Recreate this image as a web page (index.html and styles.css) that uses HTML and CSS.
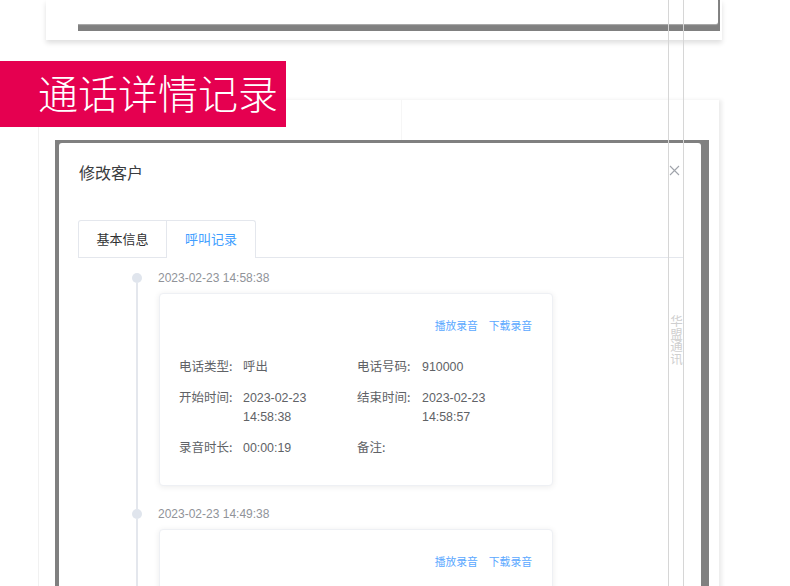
FILE: index.html
```html
<!DOCTYPE html>
<html lang="zh-CN">
<head>
<meta charset="utf-8">
<title>通话详情记录</title>
<link rel="stylesheet" href="styles.css">
</head>
<body>
<div class="page">
  <div class="top-card">
    <div class="top-mask"><div class="top-dialog"></div></div>
  </div>

  <div class="banner">通话详情记录</div>

  <div class="bg-card">
    <div class="bg-head"></div>
    <div class="mask">
      <div class="dialog">
        <div class="dlg-header">
          <span class="dlg-title">修改客户</span>
          <svg class="close" width="11" height="11" viewBox="0 0 11 11"><path d="M1 1L10 10M10 1L1 10" stroke="#a0a4ab" stroke-width="1.1" fill="none"/></svg>
        </div>
        <div class="tabs">
          <div class="tab">基本信息</div>
          <div class="tab active">呼叫记录</div>
        </div>
        <div class="timeline">
          <div class="tl-item">
            <div class="rail"><span class="dot"></span><span class="line"></span></div>
            <div class="tl-body">
              <div class="stamp">2023-02-23 14:58:38</div>
              <div class="card">
                <div class="links"><a>播放录音</a><a>下载录音</a></div>
                <div class="grid">
                  <span class="lab">电话类型:</span><span class="val">呼出</span>
                  <span class="lab">电话号码:</span><span class="val">910000</span>
                  <span class="lab">开始时间:</span><span class="val">2023-02-23 14:58:38</span>
                  <span class="lab">结束时间:</span><span class="val">2023-02-23 14:58:57</span>
                  <span class="lab">录音时长:</span><span class="val">00:00:19</span>
                  <span class="lab">备注:</span><span class="val"></span>
                </div>
              </div>
            </div>
          </div>
          <div class="tl-item">
            <div class="rail"><span class="dot"></span><span class="line"></span></div>
            <div class="tl-body">
              <div class="stamp">2023-02-23 14:49:38</div>
              <div class="card">
                <div class="links"><a>播放录音</a><a>下载录音</a></div>
              </div>
            </div>
          </div>
        </div>
      </div>
    </div>
  </div>

  <div class="guide g1"></div>
  <div class="guide g2"></div>
  <div class="watermark">华盟通讯</div>
</div>
</body>
</html>
```

FILE: styles.css
```css
html, body {
  margin: 0;
  padding: 0;
  background: #ffffff;
}
body {
  font-family: "Liberation Sans", "Noto Sans CJK SC", sans-serif;
  color: #606266;
}
.page {
  position: relative;
  width: 790px;
  height: 586px;
  overflow: hidden;
  background: #ffffff;
}

/* top previous screenshot */
.top-card {
  margin-left: 46px;
  width: 676px;
  height: 40px;
  background: #ffffff;
  box-shadow: 0 3px 5px rgba(0, 0, 0, 0.13);
}
.top-mask {
  margin-left: 32px;
  width: 642px;
  height: 31px;
  background: #808080;
}
.top-dialog {
  width: 640px;
  height: 24px;
  background: #ffffff;
  border-bottom-right-radius: 2px;
  box-shadow: 0 1px 1px rgba(255, 255, 255, 0.35);
}

/* banner */
.banner {
  position: relative;
  z-index: 2;
  margin-top: 21px;
  width: 248px;
  height: 66px;
  padding-left: 38px;
  background: #e50050;
  color: #ffffff;
  font-family: "Noto Sans CJK SC", sans-serif;
  font-weight: 300;
  font-size: 40px;
  line-height: 63px;
}

/* background card */
.bg-card {
  margin-top: -27px;
  margin-left: 38px;
  width: 680px;
  height: 520px;
  background: #ffffff;
  border-left: 1px solid #f1f1f1;
  box-shadow: 3px 0 4px rgba(0, 0, 0, 0.08);
}
.bg-head {
  height: 40px;
  width: 362px;
  border-right: 1px solid #f6f6f6;
}
.mask {
  margin-left: 16px;
  width: 642px;
  height: 480px;
  padding: 3px 8px 0 4px;
  background: #808080;
}
.dialog {
  width: 642px;
  height: 480px;
  background: #ffffff;
  border-radius: 3px 3px 0 0;
}
.dlg-header {
  display: flex;
  justify-content: space-between;
  align-items: center;
  padding: 17px 21px 0 20px;
  height: 24px;
}
.dlg-title {
  font-family: "Noto Sans CJK SC", sans-serif;
  font-size: 16px;
  line-height: 24px;
  color: #3a3c40;
}
.close {
  display: block;
  margin-top: -4px;
}

/* tabs */
.tabs {
  display: flex;
  margin: 36px 0 0 19px;
  width: 605px;
  height: 37px;
  border-bottom: 1px solid #e4e7ed;
}
.tab {
  box-sizing: border-box;
  width: 89px;
  height: 37px;
  border: 1px solid #e4e7ed;
  border-bottom: none;
  font-family: "Noto Sans CJK SC", sans-serif;
  font-size: 13px;
  line-height: 36px;
  color: #303133;
  text-align: center;
}
.tab:first-child {
  border-radius: 3px 0 0 0;
}
.tab.active {
  border-left: none;
  height: 38px;
  margin-bottom: -1px;
  color: #409eff;
  background: #ffffff;
  border-radius: 0 3px 0 0;
}

/* timeline */
.timeline {
  padding: 13px 0 0 73px;
}
.tl-item {
  display: flex;
  gap: 16px;
  padding-bottom: 21px;
}
.rail {
  width: 10px;
  display: flex;
  flex-direction: column;
  align-items: center;
  padding-top: 2px;
}
.dot {
  width: 10px;
  height: 10px;
  border-radius: 50%;
  background: #e0e5ed;
  flex: none;
}
.line {
  width: 2px;
  flex: 1;
  background: #e4e7ed;
  margin-bottom: -23px;
}
.tl-body {
  flex: none;
}
.stamp {
  font-size: 12px;
  line-height: 14px;
  color: #909399;
  margin-bottom: 8px;
}
.card {
  box-sizing: border-box;
  margin-left: 1px;
  width: 394px;
  height: 193px;
  padding: 23px 20px 0 19px;
  background: #ffffff;
  border: 1px solid #eef0f4;
  border-radius: 4px;
  box-shadow: 0 1px 6px rgba(0, 0, 0, 0.08);
}
.links {
  display: flex;
  justify-content: flex-end;
  gap: 11px;
  font-family: "Noto Sans CJK SC", sans-serif;
  font-size: 10.8px;
  line-height: 16px;
  color: #5aa8ff;
}
.grid {
  display: grid;
  grid-template-columns: 64px 114px 65px 1fr;
  align-items: baseline;
  row-gap: 10px;
  margin-top: 23px;
  font-size: 12.4px;
  line-height: 19px;
  color: #606266;
}
.lab {
  font-family: "Noto Sans CJK SC", sans-serif;
  font-size: 12.5px;
  color: #606266;
}

/* overlays */
.guide {
  position: absolute;
  top: 0;
  width: 1px;
  height: 586px;
  background: #d6d6d6;
}
.g1 { left: 668px; }
.g2 { left: 683px; }
.watermark {
  position: absolute;
  left: 669px;
  top: 315px;
  width: 14px;
  writing-mode: vertical-rl;
  text-orientation: upright;
  font-family: "Noto Sans CJK SC", sans-serif;
  font-size: 12.5px;
  line-height: 14px;
  color: #cfcfcf;
}
```
